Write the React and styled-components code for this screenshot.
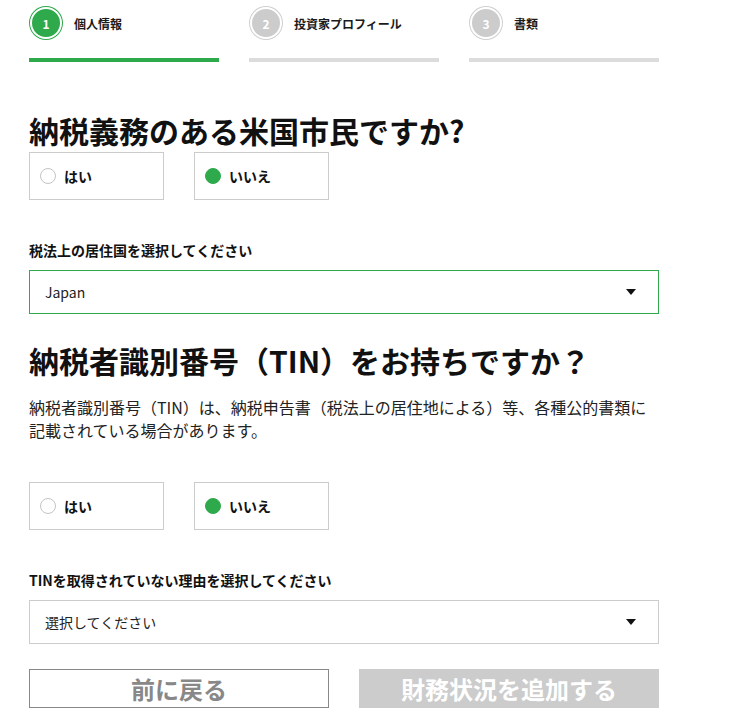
import React, { useState } from "react";
import styled, { createGlobalStyle } from "styled-components";

const GREEN = "#2ea94b";

const GlobalStyle = createGlobalStyle`
  html, body {
    margin: 0;
    padding: 0;
    background: #ffffff;
  }
  body {
    font-family: "Noto Sans CJK JP", "Noto Sans", sans-serif;
    color: #111;
  }
`;

const Page = styled.div`
  width: 630px;
  padding: 7px 29px 20px;
`;

const Stepper = styled.div`
  display: grid;
  grid-template-columns: repeat(3, 1fr);
  column-gap: 30px;
`;

const Step = styled.div`
  display: flex;
  flex-direction: column;
`;

const StepHead = styled.div`
  display: flex;
  align-items: center;
  gap: 12px;
  height: 32px;
`;

const StepCircle = styled.div`
  width: 28px;
  height: 28px;
  border-radius: 50%;
  border: 2px solid #fff;
  box-shadow: 0 0 0 1px ${(p) => (p.active ? GREEN : "#cfcfcf")};
  background: ${(p) => (p.active ? GREEN : "#cccccc")};
  color: #fff;
  font-size: 12px;
  font-weight: 700;
  display: flex;
  align-items: center;
  justify-content: center;
  margin-left: 1px;
`;

const StepLabel = styled.span`
  font-size: 12px;
  font-weight: 700;
  color: #1a1a1a;
`;

const StepBar = styled.div`
  margin-top: 19px;
  height: 4px;
  background: ${(p) => (p.active ? GREEN : "#dcdcdc")};
`;

const Heading = styled.h2`
  margin: ${(p) => p.top}px 0 0;
  font-size: 30px;
  line-height: 36px;
  font-weight: 700;
  color: #111;
  letter-spacing: 0;
  white-space: nowrap;
`;

const RadioRow = styled.div`
  display: flex;
  gap: 30px;
  margin-top: ${(p) => p.top}px;
`;

const RadioBox = styled.label`
  box-sizing: border-box;
  width: 135px;
  height: 48px;
  border: 1px solid #cccccc;
  display: flex;
  align-items: center;
  gap: 8px;
  padding-left: 10px;
  cursor: pointer;
  font-size: 14px;
  font-weight: 700;
  color: #111;
`;

const Dot = styled.span`
  box-sizing: border-box;
  width: 16px;
  height: 16px;
  border-radius: 50%;
  border: 1px solid ${(p) => (p.checked ? GREEN : "#c4c4c4")};
  background: ${(p) => (p.checked ? GREEN : "#fff")};
`;

const FieldLabel = styled.div`
  margin-top: 40px;
  font-size: 14px;
  line-height: 20px;
  font-weight: 700;
  color: #111;
`;

const Select = styled.div`
  box-sizing: border-box;
  margin-top: 10px;
  height: 44px;
  border: 1px solid ${(p) => (p.focused ? GREEN : "#cccccc")};
  display: flex;
  align-items: center;
  justify-content: space-between;
  padding: 0 22px 0 15px;
  font-size: 14px;
  color: #222;
`;

const Caret = styled.svg`
  width: 10px;
  height: 6px;
`;

const Lead = styled.p`
  margin: 18px 0 0;
  font-size: 16px;
  line-height: 23px;
  color: #222;
  white-space: nowrap;
`;

const Buttons = styled.div`
  display: grid;
  grid-template-columns: 1fr 1fr;
  column-gap: 30px;
  margin-top: 25px;
`;

const Button = styled.button`
  box-sizing: border-box;
  height: 39px;
  padding: 0;
  font-family: inherit;
  font-size: 24px;
  line-height: 1;
  font-weight: 700;
  border: 1px solid ${(p) => (p.primary ? "#cccccc" : "#888888")};
  background: ${(p) => (p.primary ? "#cccccc" : "#ffffff")};
  color: ${(p) => (p.primary ? "#ffffff" : "#888888")};
  cursor: pointer;
`;

const steps = ["個人情報", "投資家プロフィール", "書類"];

function Radio({ value, onChange }) {
  return (
    <RadioRow top={value.top}>
      {["はい", "いいえ"].map((opt) => (
        <RadioBox key={opt} onClick={() => onChange(opt)}>
          <Dot checked={value.selected === opt} />
          {opt}
        </RadioBox>
      ))}
    </RadioRow>
  );
}

function Dropdown({ text, focused }) {
  return (
    <Select focused={focused}>
      <span>{text}</span>
      <Caret viewBox="0 0 10 6">
        <path d="M0 0 L10 0 L5 6 Z" fill="#111" />
      </Caret>
    </Select>
  );
}

export default function App() {
  const [citizen, setCitizen] = useState("いいえ");
  const [tin, setTin] = useState("いいえ");

  return (
    <>
      <GlobalStyle />
      <Page>
        <Stepper>
          {steps.map((s, i) => (
            <Step key={s}>
              <StepHead>
                <StepCircle active={i === 0}>{i + 1}</StepCircle>
                <StepLabel>{s}</StepLabel>
              </StepHead>
              <StepBar active={i === 0} />
            </Step>
          ))}
        </Stepper>

        <Heading top={50}>納税義務のある米国市民ですか?</Heading>
        <Radio value={{ selected: citizen, top: 4 }} onChange={setCitizen} />

        <FieldLabel>税法上の居住国を選択してください</FieldLabel>
        <Dropdown text="Japan" focused />

        <Heading top={28}>納税者識別番号（TIN）をお持ちですか？</Heading>
        <Lead>
          納税者識別番号（TIN）は、納税申告書（税法上の居住地による）等、各種公的書類に
          <br />
          記載されている場合があります。
        </Lead>
        <Radio value={{ selected: tin, top: 40 }} onChange={setTin} />

        <FieldLabel>TINを取得されていない理由を選択してください</FieldLabel>
        <Dropdown text="選択してください" />

        <Buttons>
          <Button>前に戻る</Button>
          <Button primary>財務状況を追加する</Button>
        </Buttons>
      </Page>
    </>
  );
}
